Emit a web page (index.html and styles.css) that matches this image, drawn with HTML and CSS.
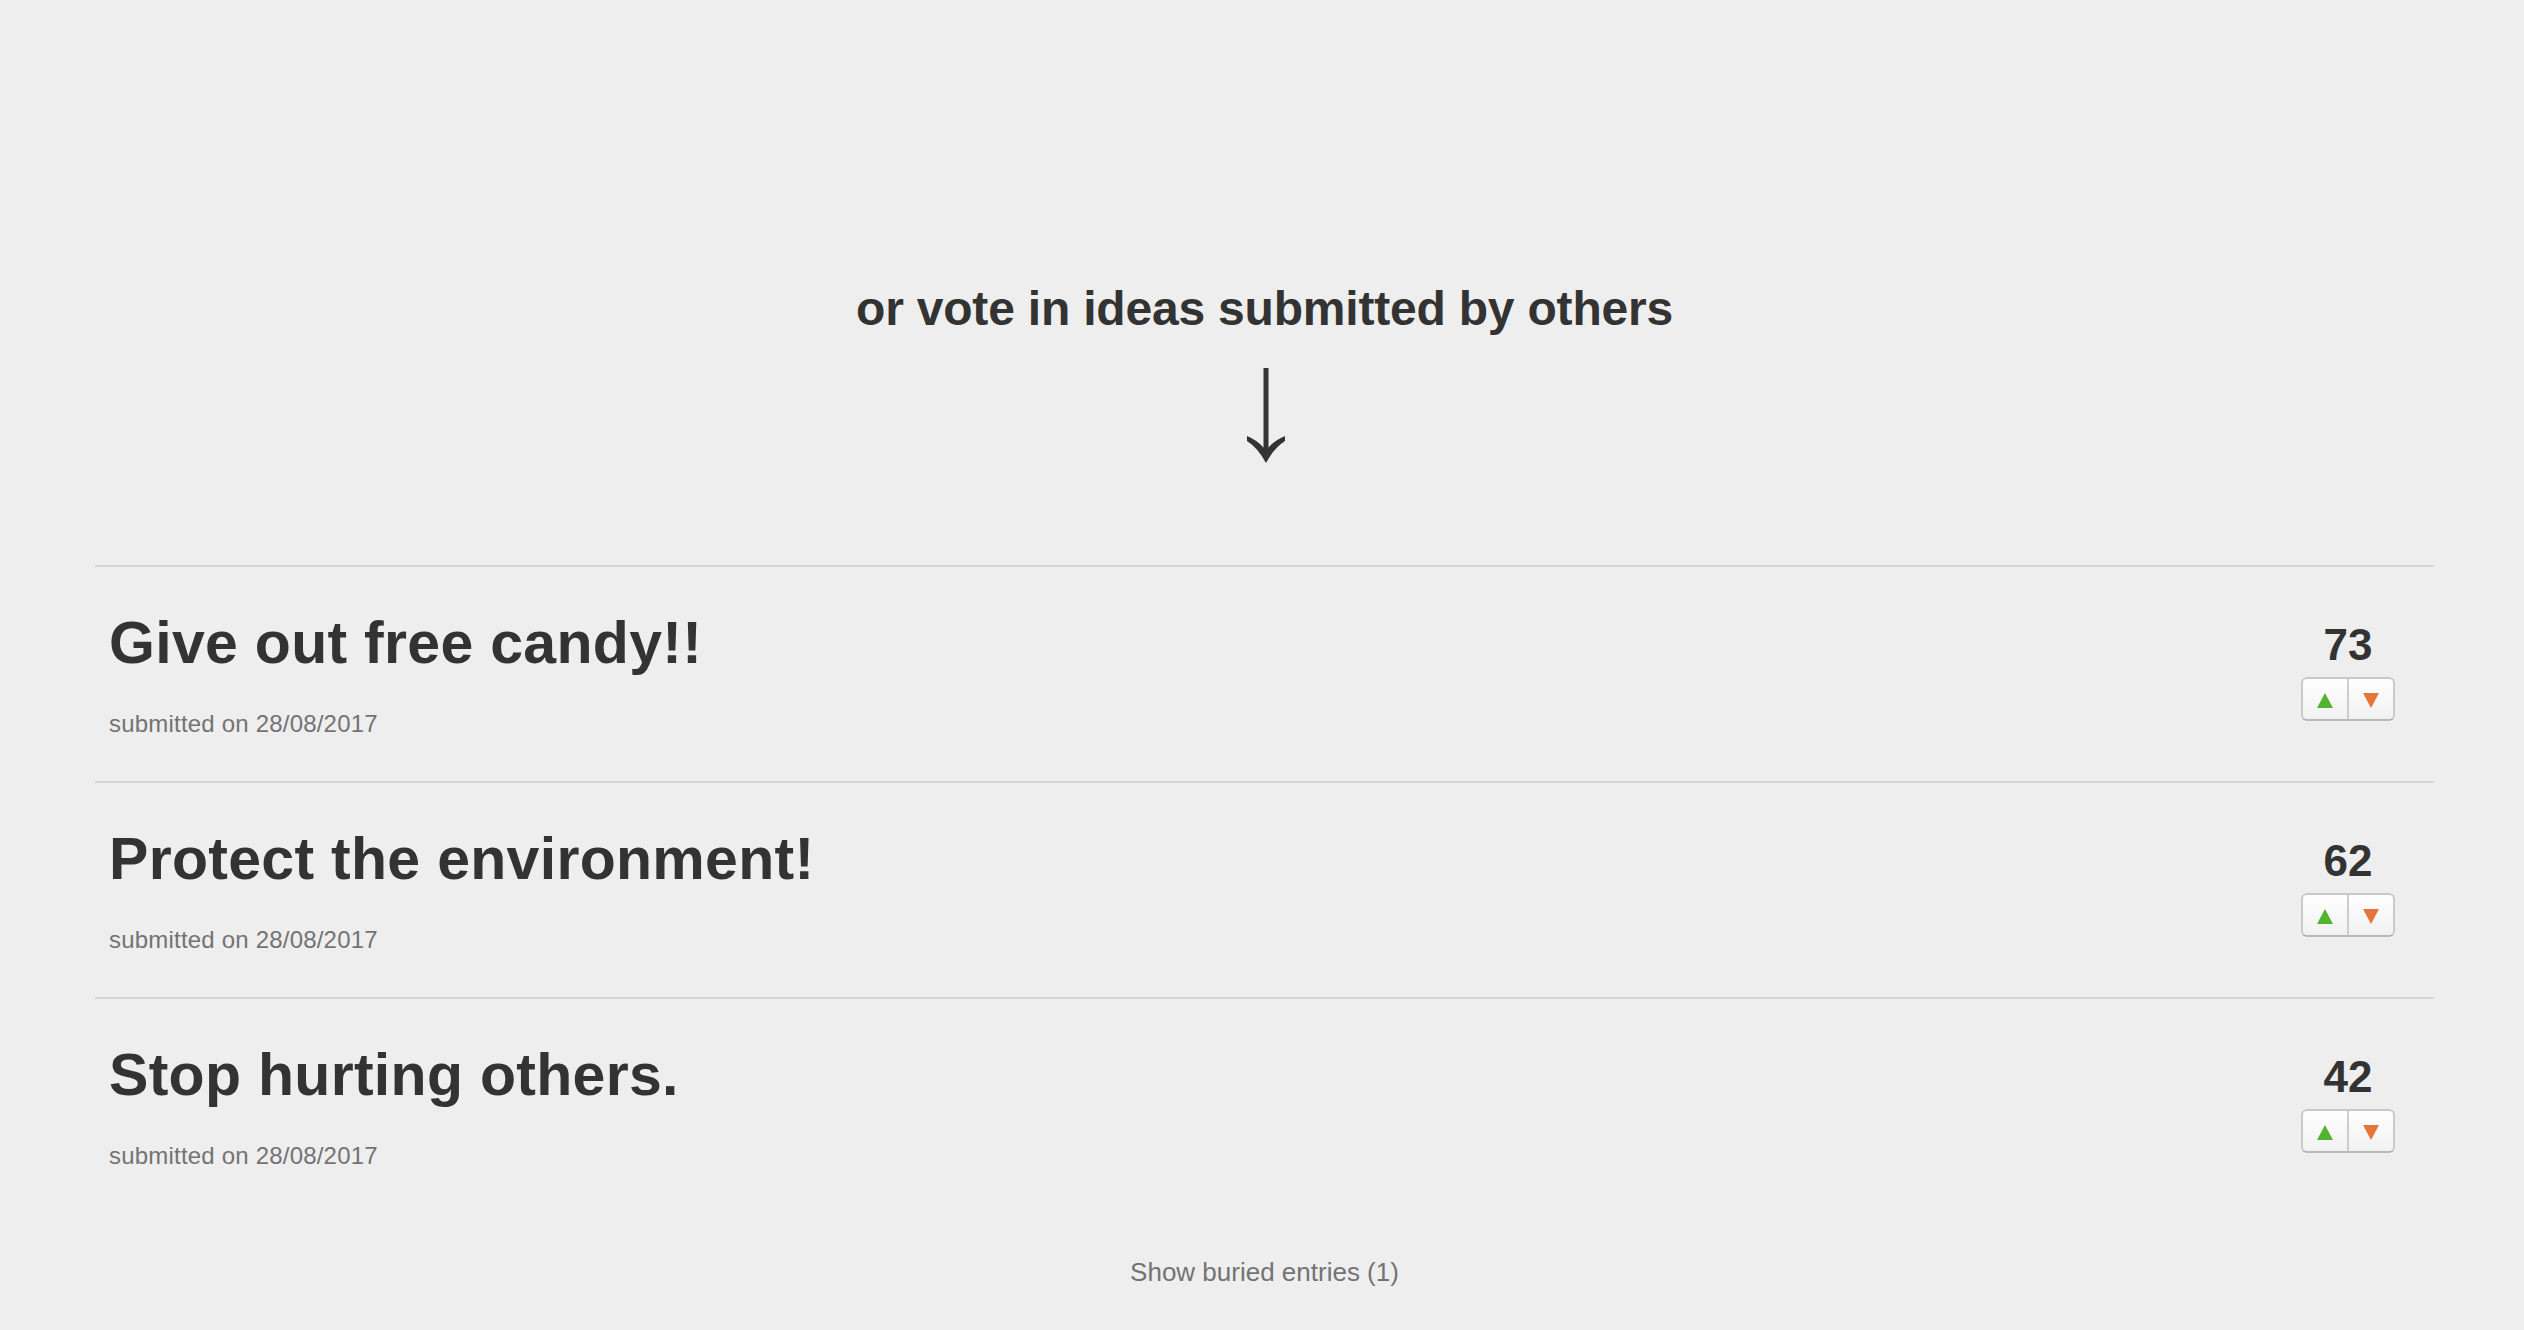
FILE: index.html
```html
<!DOCTYPE html>
<html lang="en">
<head>
<meta charset="utf-8">
<title>Ideas</title>
<link rel="stylesheet" href="styles.css">
</head>
<body>
<div class="page">
  <div class="intro">
    <h2 class="intro-title">or vote in ideas submitted by others</h2>
    <svg class="intro-arrow" width="40" height="96" viewBox="0 0 40 96" aria-hidden="true">
      <rect x="17.5" y="0" width="5" height="84" fill="#333"/>
      <path d="M1,68 Q11,72 18,80 L22,80 Q29,72 39,68 L39,73 Q28,80 20,95 Q12,80 1,73 Z" fill="#333"/>
    </svg>
  </div>

  <ul class="entries">
    <li class="entry">
      <div class="entry-main">
        <h3 class="entry-title">Give out free candy!!</h3>
        <p class="entry-date">submitted on 28/08/2017</p>
      </div>
      <div class="vote">
        <div class="vote-count">73</div>
        <div class="vote-buttons">
          <button class="vote-btn"><span class="tri-up"></span></button>
          <button class="vote-btn"><span class="tri-down"></span></button>
        </div>
      </div>
    </li>
    <li class="entry">
      <div class="entry-main">
        <h3 class="entry-title">Protect the environment!</h3>
        <p class="entry-date">submitted on 28/08/2017</p>
      </div>
      <div class="vote">
        <div class="vote-count">62</div>
        <div class="vote-buttons">
          <button class="vote-btn"><span class="tri-up"></span></button>
          <button class="vote-btn"><span class="tri-down"></span></button>
        </div>
      </div>
    </li>
    <li class="entry">
      <div class="entry-main">
        <h3 class="entry-title">Stop hurting others.</h3>
        <p class="entry-date">submitted on 28/08/2017</p>
      </div>
      <div class="vote">
        <div class="vote-count">42</div>
        <div class="vote-buttons">
          <button class="vote-btn"><span class="tri-up"></span></button>
          <button class="vote-btn"><span class="tri-down"></span></button>
        </div>
      </div>
    </li>
  </ul>

  <div class="buried">Show buried entries (1)</div>
</div>
</body>
</html>
```

FILE: styles.css
```css
* { box-sizing: border-box; }

html, body {
  margin: 0;
  padding: 0;
  background: #eeeeee;
  color: #333333;
  font-family: "Liberation Sans", Arial, Helvetica, sans-serif;
}

.page {
  padding: 0 90px 60px 95px;
}

.intro {
  display: flex;
  flex-direction: column;
  align-items: center;
  padding-top: 280px;
}

.intro-title {
  margin: 0;
  font-size: 48px;
  line-height: 58px;
  font-weight: 700;
  letter-spacing: -0.2px;
}

.intro-arrow {
  display: block;
  margin-top: 30px;
  margin-left: 2px;
}

.entries {
  list-style: none;
  margin: 101px 0 0 0;
  padding: 0;
}

.entry {
  display: flex;
  justify-content: space-between;
  align-items: flex-start;
  border-top: 2px solid #d6d6d6;
  padding: 44px 39px 42px 14px;
}

.entry-title {
  margin: 0;
  font-size: 59px;
  line-height: 64px;
  font-weight: 700;
  letter-spacing: 0.3px;
}

.entry-date {
  margin: 34px 0 0 0;
  font-size: 24px;
  line-height: 30px;
  color: #737373;
  letter-spacing: 0.2px;
}

.vote {
  display: flex;
  flex-direction: column;
  align-items: center;
  margin-top: 9px;
  width: 94px;
}

.vote-count {
  font-size: 44px;
  line-height: 50px;
  font-weight: 700;
}

.vote-buttons {
  display: flex;
  margin-top: 7px;
  width: 94px;
  height: 44px;
  border: 2px solid #c9c9c9;
  border-bottom-color: #b8b8b8;
  border-radius: 6px;
  background: linear-gradient(#ffffff, #f1f1f1);
  overflow: hidden;
}

.vote-btn {
  flex: 1;
  display: flex;
  align-items: center;
  justify-content: center;
  margin: 0;
  padding: 0;
  border: 0;
  background: transparent;
}

.vote-btn + .vote-btn {
  border-left: 2px solid #cdcdcd;
}

.tri-up {
  width: 0;
  height: 0;
  border-left: 8px solid transparent;
  border-right: 8px solid transparent;
  border-bottom: 15px solid #56b330;
  margin-top: 2px;
}

.tri-down {
  width: 0;
  height: 0;
  border-left: 8px solid transparent;
  border-right: 8px solid transparent;
  border-top: 15px solid #e8733b;
  margin-top: 2px;
}

.buried {
  margin-top: 43px;
  text-align: center;
  font-size: 26px;
  line-height: 32px;
  color: #737373;
}
```
